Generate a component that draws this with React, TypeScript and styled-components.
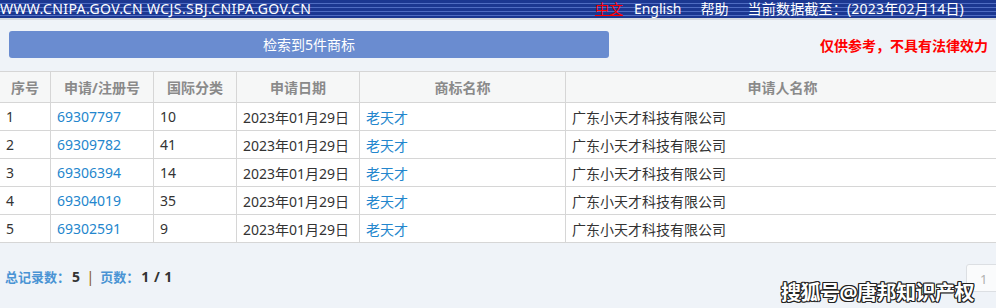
import styled, { createGlobalStyle } from "styled-components";

const GlobalStyle = createGlobalStyle`
  html, body {
    margin: 0;
    padding: 0;
    background: #eff3f8;
    overflow: hidden;
  }
  body {
    font-family: "Noto Sans", "Noto Sans CJK SC", sans-serif;
    font-size: 14px;
    color: #333;
  }
`;

const Page = styled.div`
  position: relative;
  width: 996px;
  height: 308px;
  overflow: hidden;
`;

const TopBar = styled.div`
  height: 18px;
  display: flex;
  justify-content: space-between;
  align-items: center;
  background: repeating-linear-gradient(
    to bottom,
    #1b3791 0 3px,
    #4f6cc2 3px 4px
  );
  border-bottom: 2px solid #d7dbe0;
  color: #fff;
  font-size: 14px;
  line-height: 18px;
  white-space: nowrap;
`;

const Sites = styled.span`
  letter-spacing: 0.4px;
`;

const TopNav = styled.div`
  display: flex;
  padding-right: 32px;
`;

const TopLink = styled.a<{ $active?: boolean; $gap?: number; $spacing?: number }>`
  color: ${(p) => (p.$active ? "#ff0000" : "#fff")};
  text-decoration: ${(p) => (p.$active ? "underline" : "none")};
  margin-right: ${(p) => p.$gap ?? 0}px;
  letter-spacing: ${(p) => p.$spacing ?? 0}px;
`;

const Toolbar = styled.div`
  display: flex;
  justify-content: space-between;
  align-items: center;
  padding: 11px 8px 13px 9px;
`;

const ResultButton = styled.div`
  width: 600px;
  height: 27px;
  line-height: 27px;
  background: #6a8cd0;
  border-radius: 3px;
  color: #fff;
  text-align: center;
  font-size: 14px;
`;

const Notice = styled.div`
  color: #ff0000;
  font-weight: bold;
  font-size: 14px;
`;

const Table = styled.table`
  width: 1000px;
  border-collapse: collapse;
  background: #fff;
  table-layout: fixed;
`;

const Th = styled.th<{ $w?: number }>`
  width: ${(p) => (p.$w ? `${p.$w}px` : "auto")};
  height: 30px;
  background: #f6f7f7;
  color: #8a8a8a;
  font-weight: bold;
  font-size: 14px;
  text-align: center;
  border: 1px solid #d6d6d6;
  border-left: none;
  padding: 0;
`;

const Td = styled.td`
  height: 27px;
  padding: 0 0 0 6px;
  border: 1px solid #d6d6d6;
  border-left: none;
  white-space: nowrap;
  font-size: 14px;
  color: #333;
`;

const CellLink = styled.a`
  color: #2386cd;
  text-decoration: none;
`;

const Footer = styled.div`
  display: flex;
  justify-content: space-between;
  align-items: center;
  padding: 21px 0 0 5px;
`;

const Summary = styled.div`
  font-size: 13px;
  font-weight: bold;
  margin-top: -3px;
`;

const Label = styled.span`
  color: #4a93d4;
`;

const Value = styled.span`
  color: #333;
  font-size: 14px;
  margin-left: 2px;
  letter-spacing: 0.5px;
`;

const Sep = styled.span`
  color: #8a5a20;
  font-weight: normal;
  font-size: 14px;
  margin: 0 6px;
`;

const PageBox = styled.div`
  width: 34px;
  height: 28px;
  margin-right: -4px;
  background: #fafbfc;
  border: 1px solid #dcdfe3;
  border-radius: 3px;
  color: #b0b0b0;
  font-size: 13px;
  line-height: 28px;
  padding-left: 13px;
  box-sizing: border-box;
`;

const Watermark = styled.div`
  position: absolute;
  left: 781px;
  top: 277px;
  color: #fff;
  font-size: 20px;
  font-weight: bold;
  letter-spacing: -0.5px;
  text-shadow: -1px 0 #222, 1px 0 #222, 0 -1px #222, 0 1px #222, 1px 1px #222,
    -1px -1px #222, 1px -1px #222, -1px 1px #222;
`;

const rows = [
  { no: 1, reg: "69307797", cls: "10" },
  { no: 2, reg: "69309782", cls: "41" },
  { no: 3, reg: "69306394", cls: "14" },
  { no: 4, reg: "69304019", cls: "35" },
  { no: 5, reg: "69302591", cls: "9" },
];

export default function App() {
  return (
    <Page>
      <GlobalStyle />
      <TopBar>
        <Sites>WWW.CNIPA.GOV.CN WCJS.SBJ.CNIPA.GOV.CN</Sites>
        <TopNav>
          <TopLink $active $gap={11}>中文</TopLink>
          <TopLink $gap={19}>English</TopLink>
          <TopLink $gap={19}>帮助</TopLink>
          <TopLink $spacing={0.2}>当前数据截至：(2023年02月14日)</TopLink>
        </TopNav>
      </TopBar>
      <Toolbar>
        <ResultButton>检索到5件商标</ResultButton>
        <Notice>仅供参考，不具有法律效力</Notice>
      </Toolbar>
      <Table>
        <thead>
          <tr>
            <Th $w={50}>序号</Th>
            <Th $w={102}>申请/注册号</Th>
            <Th $w={82}>国际分类</Th>
            <Th $w={122}>申请日期</Th>
            <Th $w={205}>商标名称</Th>
            <Th>申请人名称</Th>
          </tr>
        </thead>
        <tbody>
          {rows.map((r) => (
            <tr key={r.no}>
              <Td>{r.no}</Td>
              <Td>
                <CellLink>{r.reg}</CellLink>
              </Td>
              <Td>{r.cls}</Td>
              <Td>2023年01月29日</Td>
              <Td>
                <CellLink>老天才</CellLink>
              </Td>
              <Td>广东小天才科技有限公司</Td>
            </tr>
          ))}
        </tbody>
      </Table>
      <Footer>
        <Summary>
          <Label>总记录数：</Label>
          <Value>5</Value>
          <Sep>|</Sep>
          <Label>页数：</Label>
          <Value>1 / 1</Value>
        </Summary>
        <PageBox>1</PageBox>
      </Footer>
      <Watermark>搜狐号@唐邦知识产权</Watermark>
    </Page>
  );
}
